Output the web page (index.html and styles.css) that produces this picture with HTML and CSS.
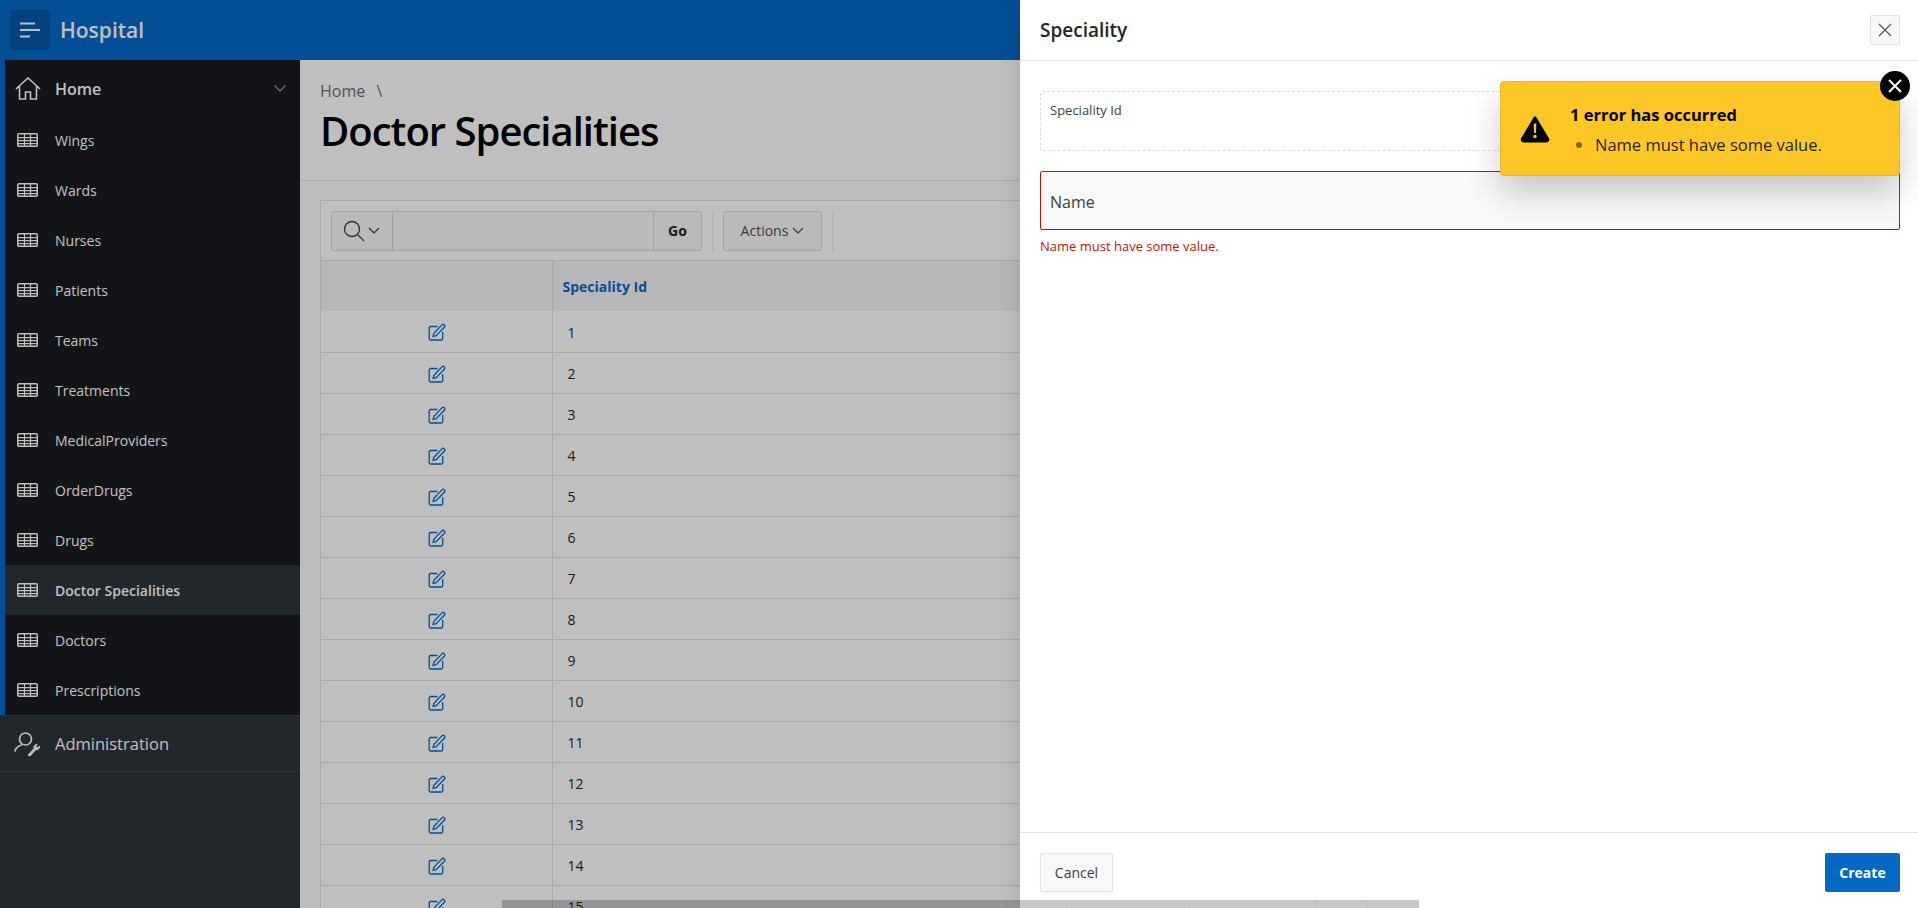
FILE: index.html
```html
<!DOCTYPE html>
<html>
<head>
    <title>Doctor Specialities</title>
    <link rel="stylesheet" href="styles.css">
</head>
<body>
    <svg class="sprite" xmlns="http://www.w3.org/2000/svg">
        <symbol id="i-table" viewBox="0 0 21 14">
            <rect x="0.75" y="0.75" width="19.500" height="12.500" rx="1" fill="none" stroke="currentColor" stroke-width="1.500"/>
            <path d="M1 4.700h19M1 7.700h19M1 10.700h19M7.500 1v12M13.500 1v12" fill="none" stroke="currentColor" stroke-width="1.200"/>
        </symbol>
        <symbol id="i-edit" viewBox="0 0 18 18">
            <path d="M9.500 3.500H2.600A1.400 1.400 0 0 0 1.200 4.900v10.700A1.400 1.400 0 0 0 2.600 17h10.700a1.400 1.400 0 0 0 1.400-1.400V9" fill="none" stroke="currentColor" stroke-width="1.300"/>
            <path d="M6 10.200 13.900 1.900a1.700 1.700 0 0 1 2.400 0 1.700 1.700 0 0 1 0 2.400L8.200 12.600l-3.100.7z" fill="none" stroke="currentColor" stroke-width="1.300"/>
        </symbol>
    </svg>

    <header class="topbar">
        <button class="nav-toggle">
            <svg width="20" height="16" viewBox="0 0 20 16"><path d="M0 1.500h15M0 8h20M0 14.500h10" stroke="#fff" stroke-width="2" fill="none"/></svg>
        </button>
        <span class="app-name">Hospital</span>
    </header>

    <div class="shell">
        <nav class="sidebar">
            <div class="nav-group">
                <div class="nav-home">
                    <svg class="home-icon" width="26" height="23" viewBox="0 0 26 23"><path d="M1 12 13 1l12 11M4.500 9.500V22h6v-7h5v7h6V9.500" fill="none" stroke="currentColor" stroke-width="1.600"/></svg>
                    <span>Home</span>
                    <svg class="chevron" width="12" height="7" viewBox="0 0 12 7"><path d="M.5.5 6 6 11.500.5" fill="none" stroke="currentColor" stroke-width="1.200"/></svg>
                </div>
                <a class="nav-item"><svg class="table-icon"><use href="#i-table"/></svg>Wings</a>
                <a class="nav-item"><svg class="table-icon"><use href="#i-table"/></svg>Wards</a>
                <a class="nav-item"><svg class="table-icon"><use href="#i-table"/></svg>Nurses</a>
                <a class="nav-item"><svg class="table-icon"><use href="#i-table"/></svg>Patients</a>
                <a class="nav-item"><svg class="table-icon"><use href="#i-table"/></svg>Teams</a>
                <a class="nav-item"><svg class="table-icon"><use href="#i-table"/></svg>Treatments</a>
                <a class="nav-item"><svg class="table-icon"><use href="#i-table"/></svg>MedicalProviders</a>
                <a class="nav-item"><svg class="table-icon"><use href="#i-table"/></svg>OrderDrugs</a>
                <a class="nav-item"><svg class="table-icon"><use href="#i-table"/></svg>Drugs</a>
                <a class="nav-item active"><svg class="table-icon"><use href="#i-table"/></svg>Doctor Specialities</a>
                <a class="nav-item"><svg class="table-icon"><use href="#i-table"/></svg>Doctors</a>
                <a class="nav-item"><svg class="table-icon"><use href="#i-table"/></svg>Prescriptions</a>
            </div>
            <div class="nav-admin">
                <svg class="admin-icon" width="28" height="26" viewBox="0 0 28 26">
                    <circle cx="11.500" cy="8" r="6" fill="none" stroke="currentColor" stroke-width="1.700"/>
                    <path d="M1 20c1-3.500 3-5 6.500-6" fill="none" stroke="currentColor" stroke-width="1.700" stroke-linecap="round"/>
                    <path d="M14 24l6-6.500c-.6-2 .6-4 3-4.200l-1.200 2.300 1.500 1.200 2.200-1.700c.3 2.500-1.700 4.200-3.900 3.700L16 25z" fill="currentColor" stroke="currentColor" stroke-width="1"/>
                </svg>
                <span>Administration</span>
            </div>
        </nav>

        <main class="main">
            <div class="page-head">
                <div class="crumbs">Home <span class="crumb-sep">\</span></div>
                <h1>Doctor Specialities</h1>
            </div>
            <section class="report">
                <div class="toolbar">
                    <div class="search">
                        <div class="search-pick">
                            <svg width="22" height="22" viewBox="0 0 22 22"><circle cx="9" cy="9" r="7.500" fill="none" stroke="currentColor" stroke-width="1.300"/><path d="M14.500 14.500l6.500 6.500" stroke="currentColor" stroke-width="1.300"/></svg>
                            <svg width="12" height="7" viewBox="0 0 12 7"><path d="M1 1l5 5 5-5" fill="none" stroke="currentColor" stroke-width="1.200"/></svg>
                        </div>
                        <div class="search-input"></div>
                        <div class="search-go">Go</div>
                    </div>
                    <div class="tool-sep"></div>
                    <div class="actions">Actions
                        <svg width="12" height="7" viewBox="0 0 12 7"><path d="M1 1l5 5 5-5" fill="none" stroke="currentColor" stroke-width="1.200"/></svg>
                    </div>
                    <div class="tool-sep"></div>
                </div>
                <table class="grid">
                    <thead>
                        <tr><th class="col-edit"></th><th class="col-id">Speciality Id</th></tr>
                    </thead>
                    <tbody>
                        <tr><td class="cell-edit"><svg><use href="#i-edit"/></svg></td><td>1</td></tr>
                        <tr><td class="cell-edit"><svg><use href="#i-edit"/></svg></td><td>2</td></tr>
                        <tr><td class="cell-edit"><svg><use href="#i-edit"/></svg></td><td>3</td></tr>
                        <tr><td class="cell-edit"><svg><use href="#i-edit"/></svg></td><td>4</td></tr>
                        <tr><td class="cell-edit"><svg><use href="#i-edit"/></svg></td><td>5</td></tr>
                        <tr><td class="cell-edit"><svg><use href="#i-edit"/></svg></td><td>6</td></tr>
                        <tr><td class="cell-edit"><svg><use href="#i-edit"/></svg></td><td>7</td></tr>
                        <tr><td class="cell-edit"><svg><use href="#i-edit"/></svg></td><td>8</td></tr>
                        <tr><td class="cell-edit"><svg><use href="#i-edit"/></svg></td><td>9</td></tr>
                        <tr><td class="cell-edit"><svg><use href="#i-edit"/></svg></td><td>10</td></tr>
                        <tr><td class="cell-edit"><svg><use href="#i-edit"/></svg></td><td>11</td></tr>
                        <tr><td class="cell-edit"><svg><use href="#i-edit"/></svg></td><td>12</td></tr>
                        <tr><td class="cell-edit"><svg><use href="#i-edit"/></svg></td><td>13</td></tr>
                        <tr><td class="cell-edit"><svg><use href="#i-edit"/></svg></td><td>14</td></tr>
                        <tr><td class="cell-edit"><svg><use href="#i-edit"/></svg></td><td>15</td></tr>
                    </tbody>
                </table>
            </section>
        </main>
    </div>

    <div class="scrim"></div>

    <aside class="dialog">
        <div class="dialog-head">
            <span class="dialog-title">Speciality</span>
            <button class="dialog-close">
                <svg width="14" height="14" viewBox="0 0 14 14"><path d="M1 1l12 12M13 1 1 13" stroke="#555" stroke-width="1.200" fill="none"/></svg>
            </button>
        </div>
        <div class="dialog-body">
            <div class="field-readonly">Speciality Id</div>
            <div class="field-error">Name</div>
            <div class="error-text">Name must have some value.</div>
        </div>
        <div class="dialog-foot">
            <button class="btn-cancel">Cancel</button>
            <button class="btn-create">Create</button>
        </div>

        <div class="alert">
            <svg class="alert-icon" width="30" height="28" viewBox="0 0 30 28">
                <path d="M15 2.500 27.800 24a1.500 1.500 0 0 1-1.300 2.200h-23A1.500 1.500 0 0 1 2.200 24z" fill="#000" stroke="#000" stroke-width="2.500" stroke-linejoin="round"/>
                <path d="M13.600 8.500h2.800l-.5 9.500h-1.800z" fill="#fec627"/>
                <circle cx="15" cy="21.500" r="1.700" fill="#fec627"/>
            </svg>
            <div class="alert-text">
                <div class="alert-title">1 error has occurred</div>
                <ul class="alert-list"><li>Name must have some value.</li></ul>
            </div>
            <button class="alert-close">
                <svg width="14" height="14" viewBox="0 0 14 14"><path d="M1 1l12 12M13 1 1 13" stroke="#fff" stroke-width="2" fill="none"/></svg>
            </button>
        </div>
    </aside>

    <div class="scrollbar"></div>
</body>
</html>
```

FILE: styles.css
```css
* {
    box-sizing: border-box;
}

html, body {
    height: 100%;
}

body {
    margin: 0;
    overflow: hidden;
    position: relative;
    font-family: "Open Sans", "Noto Sans", sans-serif;
    font-size: 14px;
    color: #262626;
    background-color: #fff;
}

button {
    font-family: inherit;
    cursor: pointer;
}

.sprite {
    display: none;
}

/* top bar */
.topbar {
    height: 60px;
    display: flex;
    align-items: center;
    padding-left: 10px;
    background-color: #056ac8;
}

.nav-toggle {
    width: 40px;
    height: 40px;
    display: flex;
    align-items: center;
    justify-content: center;
    background-color: #0559a8;
    border: none;
    border-radius: 2px;
    padding: 0;
}

.app-name {
    margin-left: 10px;
    color: #fff;
    font-size: 21px;
    font-weight: 600;
}

.shell {
    display: flex;
    height: 848px;
}

/* side menu */
.sidebar {
    width: 300px;
    flex-shrink: 0;
    background-color: #2d3439;
    color: #fff;
}

.nav-group {
    border-left: 5px solid #056ac8;
    background-color: #191b20;
}

.nav-home {
    height: 55px;
    display: flex;
    align-items: center;
    padding: 2px 0 0 10px;
    font-size: 16px;
    font-weight: 600;
}

.nav-home span {
    margin-left: 14px;
}

.chevron {
    margin-left: auto;
    margin-right: 14px;
    color: #999;
}

.nav-item {
    height: 50px;
    display: flex;
    align-items: center;
    padding-left: 12px;
    font-size: 14px;
}

.table-icon {
    width: 21px;
    height: 14px;
    margin-right: 17px;
    flex-shrink: 0;
}

.nav-item.active {
    background-color: #2d3439;
    font-weight: 600;
}

.nav-admin {
    height: 57px;
    display: flex;
    align-items: center;
    padding-left: 14px;
    border-top: 1px solid #3e464c;
    border-bottom: 1px solid #3e464c;
    font-size: 16.5px;
}

.admin-icon {
    margin-right: 13px;
}

/* page */
.main {
    flex: 1;
    min-width: 0;
    background-color: #fdfdfd;
}

.page-head {
    height: 121px;
    padding: 20px 20px 0 20px;
    border-bottom: 1px solid #e4e4e4;
    background-color: #fff;
}

.crumbs {
    font-size: 16px;
    line-height: 22px;
    color: #707070;
}

.crumb-sep {
    margin-left: 7px;
}

h1 {
    margin: 6px 0 0;
    font-size: 40px;
    line-height: 46px;
    font-weight: 600;
    color: #000;
    letter-spacing: -1px;
}

.report {
    margin: 19px 0 0 20px;
    border-left: 1px solid #e1e1e1;
    border-top: 1px solid #e1e1e1;
    background-color: #fff;
}

.toolbar {
    height: 60px;
    display: flex;
    align-items: center;
    padding-left: 10px;
    border-bottom: 1px solid #e1e1e1;
}

.search {
    width: 371px;
    height: 40px;
    display: flex;
    border: 1px solid #d9d9d9;
    border-radius: 3px;
    background-color: #f8f8f8;
}

.search-pick {
    width: 61px;
    display: flex;
    align-items: center;
    justify-content: center;
    gap: 3px;
    color: #404040;
    border-right: 1px solid #d9d9d9;
    padding-right: 2px;
}

.search-input {
    flex: 1;
    background-color: #f9f9f9;
}

.search-go {
    width: 48px;
    display: flex;
    align-items: center;
    justify-content: center;
    border-left: 1px solid #d9d9d9;
    font-weight: 700;
    color: #262626;
}

.tool-sep {
    width: 1px;
    height: 40px;
    margin: 0 10px;
    background-color: #ececec;
}

.actions {
    width: 99px;
    height: 40px;
    display: flex;
    align-items: center;
    justify-content: center;
    gap: 4px;
    border: 1px solid #d9d9d9;
    border-radius: 3px;
    background-color: #f8f8f8;
    color: #505050;
}

.grid {
    width: 1400px;
    border-collapse: collapse;
    table-layout: fixed;
}

.grid th {
    height: 50px;
    text-align: left;
    background-color: #f5f5f5;
    padding: 1px 10px 0;
    font-size: 14px;
    font-weight: 700;
    color: #056ac8;
}

.col-edit {
    width: 231px;
}

.grid td {
    height: 41px;
    padding: 2px 15px 0;
    border-bottom: 1px solid #e1e1e1;
    border-left: 1px solid #e1e1e1;
}

.grid th + th {
    border-left: 1px solid #e1e1e1;
}

.grid td.cell-edit {
    padding: 2px 0 0 1px;
    text-align: center;
    border-left: none;
    color: #056ac8;
}

.cell-edit svg {
    width: 18px;
    height: 18px;
    display: block;
    margin: 0 auto;
}

/* dark layer behind the dialog */
.scrim {
    position: absolute;
    inset: 0;
    background-color: rgba(0, 0, 0, 0.25);
}

/* dialog */
.dialog {
    position: absolute;
    top: 0;
    right: 0;
    bottom: 0;
    width: 898px;
    display: flex;
    flex-direction: column;
    background-color: #fff;
    box-shadow: 0 0 20px rgba(0, 0, 0, 0.15);
}

.dialog-head {
    height: 61px;
    flex-shrink: 0;
    display: flex;
    align-items: center;
    justify-content: space-between;
    padding: 0 18px 0 20px;
    border-bottom: 1px solid #e4e4e4;
}

.dialog-title {
    font-size: 19px;
    font-weight: 600;
    color: #262626;
}

.dialog-close {
    width: 30px;
    height: 30px;
    display: flex;
    align-items: center;
    justify-content: center;
    padding: 0;
    border: 1px solid #e2e2e2;
    border-radius: 2px;
    background-color: #f8f8f8;
}

.dialog-body {
    flex: 1;
    padding: 30px 18px 0 20px;
}

.field-readonly {
    height: 60px;
    padding: 9px 9px 0;
    border: 1px dashed #dcdcdc;
    border-radius: 2px;
    font-size: 13px;
    line-height: 18px;
    color: #404040;
}

.field-error {
    height: 59px;
    margin-top: 20px;
    display: flex;
    align-items: center;
    padding: 2px 9px 0;
    border: 1px solid #cb1100;
    border-radius: 2px;
    background-color: #f8f8f8;
    font-size: 16px;
    color: #404040;
}

.error-text {
    margin-top: 7px;
    font-size: 13px;
    line-height: 18px;
    color: #cb1100;
}

.dialog-foot {
    height: 76px;
    flex-shrink: 0;
    display: flex;
    align-items: flex-start;
    justify-content: space-between;
    padding: 20px 18px 0 20px;
    border-top: 1px solid #e4e4e4;
}

.btn-cancel {
    width: 73px;
    height: 39px;
    padding: 0;
    border: 1px solid #e2e2e2;
    border-radius: 2px;
    background-color: #f8f8f8;
    box-shadow: 0 1px 2px rgba(0, 0, 0, 0.05);
    font-size: 14px;
    color: #404040;
}

.btn-create {
    width: 75px;
    height: 39px;
    padding: 0;
    border: none;
    border-radius: 2px;
    background-color: #0568c5;
    font-size: 14px;
    font-weight: 700;
    color: #fff;
}

/* error notification */
.alert {
    position: absolute;
    top: 81px;
    right: 18px;
    width: 400px;
    height: 95px;
    display: flex;
    align-items: center;
    padding-left: 19px;
    background-color: #fec627;
    border: 1px solid #e6b32c;
    border-radius: 4px;
    box-shadow: 0 16px 32px rgba(0, 0, 0, 0.2);
}

.alert-icon {
    flex-shrink: 0;
    margin-right: 20px;
}

.alert-text {
    padding-top: 2px;
}

.alert-title {
    font-size: 16.5px;
    line-height: 24px;
    font-weight: 700;
    color: #000;
}

.alert-list {
    margin: 6px 0 0;
    padding-left: 25px;
    font-size: 16.5px;
    line-height: 24px;
    color: #262626;
}

.alert-list li::marker {
    color: #806416;
}

.alert-close {
    position: absolute;
    top: -11px;
    right: -11px;
    width: 30px;
    height: 30px;
    display: flex;
    align-items: center;
    justify-content: center;
    padding: 0;
    border: none;
    border-radius: 50%;
    background-color: #000;
}

/* horizontal page scrollbar, shows over the dialog */
.scrollbar {
    position: absolute;
    left: 502px;
    bottom: 0;
    width: 917px;
    height: 8px;
    background-color: rgba(0, 0, 0, 0.215);
    background-image:
        linear-gradient(#c0c0c0, #c0c0c0),
        linear-gradient(#c0c0c0, #c0c0c0),
        linear-gradient(#c0c0c0, #c0c0c0),
        linear-gradient(#c0c0c0, #c0c0c0);
    background-size: 1px 100%;
    background-repeat: no-repeat;
    background-position: 564px 0, 687px 0, 813px 0, 865px 0;
}
```
